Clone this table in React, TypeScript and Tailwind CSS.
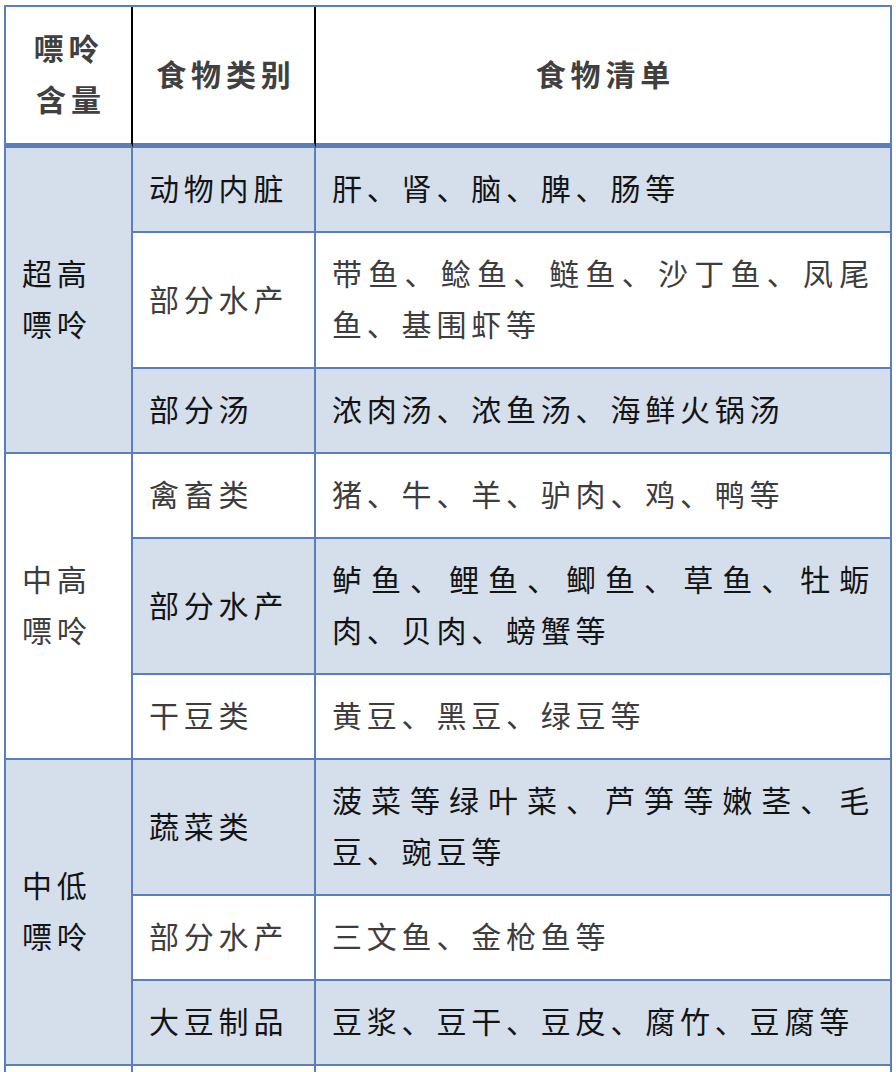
import React from 'react';

type Row = { cat: string; list: string };
type Group = { label: string; rows: Row[] };

const groups: Group[] = [
  {
    label: '超高嘌呤',
    rows: [
      { cat: '动物内脏', list: '肝、肾、脑、脾、肠等' },
      { cat: '部分水产', list: '带鱼、鲶鱼、鲢鱼、沙丁鱼、凤尾鱼、基围虾等' },
      { cat: '部分汤', list: '浓肉汤、浓鱼汤、海鲜火锅汤' },
    ],
  },
  {
    label: '中高嘌呤',
    rows: [
      { cat: '禽畜类', list: '猪、牛、羊、驴肉、鸡、鸭等' },
      { cat: '部分水产', list: '鲈鱼、鲤鱼、鲫鱼、草鱼、牡蛎肉、贝肉、螃蟹等' },
      { cat: '干豆类', list: '黄豆、黑豆、绿豆等' },
    ],
  },
  {
    label: '中低嘌呤',
    rows: [
      { cat: '蔬菜类', list: '菠菜等绿叶菜、芦笋等嫩茎、毛豆、豌豆等' },
      { cat: '部分水产', list: '三文鱼、金枪鱼等' },
      { cat: '大豆制品', list: '豆浆、豆干、豆皮、腐竹、豆腐等' },
    ],
  },
];

export default function App() {
  let idx = 0;
  return (
    <div className="h-[1072px] overflow-hidden bg-white pt-[5px] pl-[4px] font-['Noto_Sans_CJK_SC',sans-serif] text-[30px] leading-[51px] tracking-[4.8px]">
      <table className="w-[888px] table-fixed border-separate border-spacing-0 border-l-2 border-t-2 border-[#5b7fba]">
        <colgroup>
          <col className="w-[127px]" />
          <col className="w-[183px]" />
          <col className="w-[576px]" />
        </colgroup>
        <thead>
          <tr>
            <th className="border-r-2 border-b-[5px] border-r-black border-b-[#5b7fba] bg-white px-4 pt-[15px] pb-[19px] text-center align-middle font-bold text-[#404040]">
              <span className="-mr-[4.8px]">嘌呤含量</span>
            </th>
            <th className="border-r-2 border-b-[5px] border-r-black border-b-[#5b7fba] bg-white px-4 pt-[15px] pb-[19px] text-center align-middle font-bold text-[#404040]">
              <span className="-mr-[4.8px]">食物类别</span>
            </th>
            <th className="border-r-2 border-b-[5px] border-r-[#5b7fba] border-b-[#5b7fba] bg-white px-4 pt-[15px] pb-[19px] text-center align-middle font-bold text-[#404040]">
              <span className="-mr-[4.8px]">食物清单</span>
            </th>
          </tr>
        </thead>
        <tbody>
          {groups.map((g, gi) => {
            const groupBlue = gi % 2 === 0;
            return g.rows.map((r, ri) => {
              const blue = idx % 2 === 0;
              idx++;
              const rowCls = blue ? 'bg-[#d5dfec] text-[#141414]' : 'bg-white text-[#3d3d3d]';
              return (
                <tr key={`${gi}-${ri}`}>
                  {ri === 0 && (
                    <td
                      rowSpan={g.rows.length}
                      className={
                        'border-r-2 border-b-2 border-[#5b7fba] px-4 pt-[14px] pb-[18px] align-middle ' +
                        (groupBlue ? 'bg-[#d5dfec] text-[#141414]' : 'bg-white text-[#3d3d3d]')
                      }
                    >
                      {g.label}
                    </td>
                  )}
                  <td className={'border-r-2 border-b-2 border-[#5b7fba] px-4 pt-[14px] pb-[18px] align-middle ' + rowCls}>
                    {r.cat}
                  </td>
                  <td className={'border-r-2 border-b-2 border-[#5b7fba] px-4 pt-[14px] pb-[18px] align-middle text-justify ' + rowCls}>
                    {r.list}
                  </td>
                </tr>
              );
            });
          })}
          <tr>
            <td className="h-[85px] border-r-2 border-b-2 border-[#5b7fba] bg-white"></td>
            <td className="h-[85px] border-r-2 border-b-2 border-[#5b7fba] bg-white"></td>
            <td className="h-[85px] border-r-2 border-b-2 border-[#5b7fba] bg-white"></td>
          </tr>
        </tbody>
      </table>
    </div>
  );
}
